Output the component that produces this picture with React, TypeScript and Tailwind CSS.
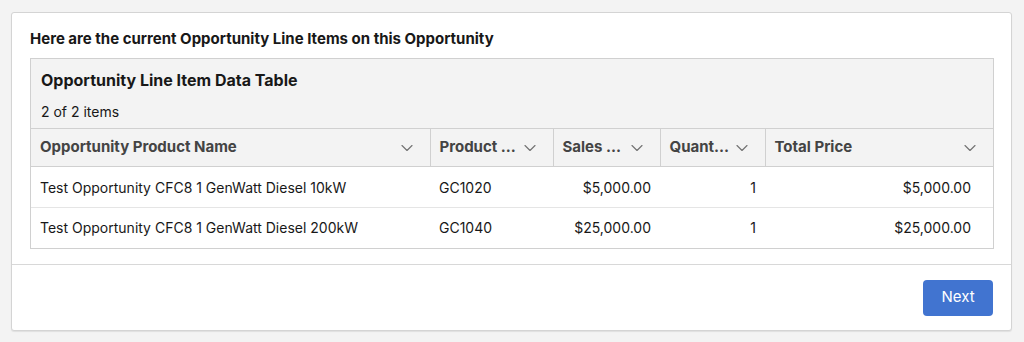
import { ChevronDown } from "lucide-react";

type Column = {
  label: string;
  width: string;
  pad: string;
};

const columns: Column[] = [
  { label: "Opportunity Product Name", width: "w-[399px]", pad: "pl-[9px]" },
  { label: "Product ...", width: "w-[123px]", pad: "pl-[9px]" },
  { label: "Sales ...", width: "w-[107px]", pad: "pr-[9px] text-right" },
  { label: "Quant...", width: "w-[105px]", pad: "pr-[9px] text-right" },
  { label: "Total Price", width: "w-[228px]", pad: "pr-[22px] text-right" }
];

const rows: string[][] = [
  ["Test Opportunity CFC8 1 GenWatt Diesel 10kW", "GC1020", "$5,000.00", "1", "$5,000.00"],
  ["Test Opportunity CFC8 1 GenWatt Diesel 200kW", "GC1040", "$25,000.00", "1", "$25,000.00"]
];

export default function App() {
  return (
    <div
      className="h-[342px] w-[1024px] bg-[#f3f3f3] pt-[12px] pl-[11px]"
      style={{ fontFamily: "Inter, 'Liberation Sans', sans-serif" }}
    >
      <div className="w-[1001px] rounded-[3px] border border-[#d4d4d4] bg-white shadow-[0_1px_1px_rgba(0,0,0,0.08)]">
        <div className="px-[18px] pt-[16px] pb-[15px]">
          <h2 className="mb-[9px] text-[15px] font-bold leading-[20px] text-[#181818]">
            Here are the current Opportunity Line Items on this Opportunity
          </h2>

          <div className="w-[964px] border border-[#d0d0d0]">
            <div className="bg-[#f3f3f3] px-[10px] pt-[11px] pb-[6px]">
              <div className="text-[16px] font-bold leading-[20px] text-[#181818]">
                Opportunity Line Item Data Table
              </div>
              <div className="mt-[12px] text-[14px] leading-[20px] text-[#181818]">
                2 of 2 items
              </div>
            </div>

            <table className="w-full table-fixed border-collapse">
              <thead>
                <tr className="h-[38px] border-t border-b border-[#d0d0d0] bg-[#f3f3f3]">
                  {columns.map((col, i) => (
                    <th
                      key={col.label}
                      className={`${col.width} p-0 text-left ${i > 0 ? "border-l border-[#d0d0d0]" : ""}`}
                    >
                      <div className="flex items-center justify-between pl-[9px] pr-[13px]">
                        <span className="text-[15px] font-bold text-[#444444]">{col.label}</span>
                        <ChevronDown size={20} strokeWidth={1.4} className="text-[#747474]" />
                      </div>
                    </th>
                  ))}
                </tr>
              </thead>
              <tbody>
                {rows.map((row, r) => (
                  <tr
                    key={row[0]}
                    className={r < rows.length - 1 ? "h-[41px] border-b border-[#e5e5e5]" : "h-[40px]"}
                  >
                    {row.map((cell, i) => (
                      <td key={i} className={`p-0 text-[14px] text-[#181818] ${columns[i].pad}`}>
                        {cell}
                      </td>
                    ))}
                  </tr>
                ))}
              </tbody>
            </table>
          </div>
        </div>

        <div className="flex justify-end border-t border-[#d8d8d8] px-[18px] pt-[15px] pb-[14px]">
          <button className="h-[36px] w-[70px] rounded-[4px] bg-[#4174d0] text-[15px] text-white">
            Next
          </button>
        </div>
      </div>
    </div>
  );
}
